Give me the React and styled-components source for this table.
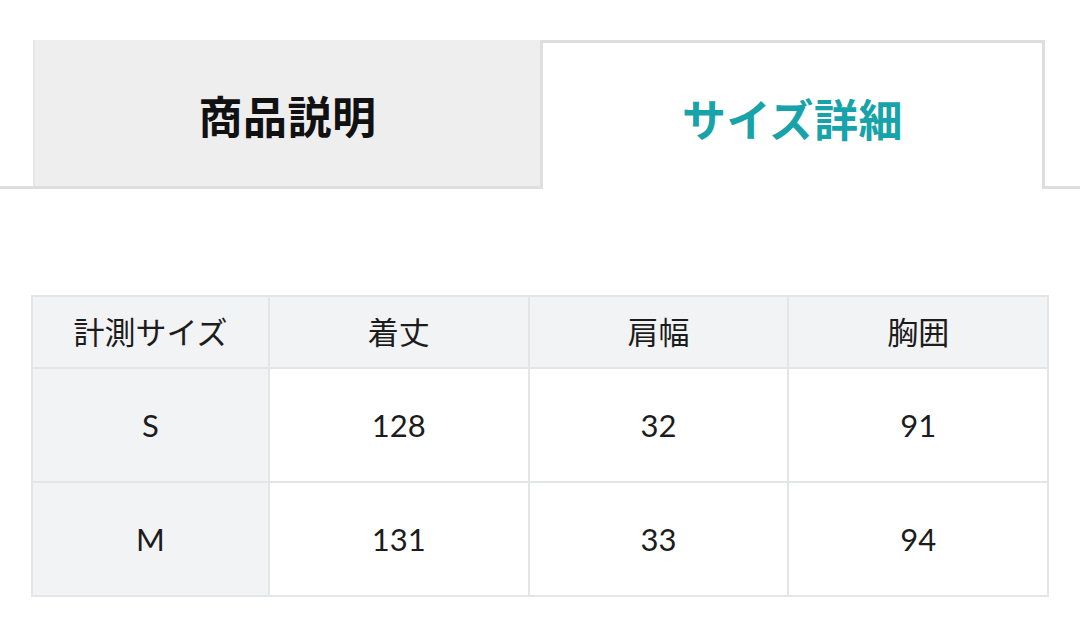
import React from 'react';
import styled, { createGlobalStyle } from 'styled-components';

const FONT = `Lato, "Noto Sans CJK JP", sans-serif`;

const GlobalStyle = createGlobalStyle`
  body {
    margin: 0;
    background: #ffffff;
    font-family: ${FONT};
  }
`;

const Page = styled.div`
  width: 1080px;
  height: 625px;
  overflow: hidden;
  background: #ffffff;
`;

const TabBar = styled.div`
  display: flex;
  align-items: flex-end;
  padding: 40px 0 0 33px;
  border-bottom: 3px solid #dedede;
`;

const Tab = styled.div`
  box-sizing: border-box;
  display: flex;
  align-items: center;
  justify-content: center;
  padding-top: 3px;
  font-family: ${FONT};
  font-weight: 700;
  font-size: 44px;
  letter-spacing: 0.5px;
  ${({ $active }) =>
    $active
      ? `
    width: 505px;
    height: 149px;
    margin-bottom: -3px;
    background: #ffffff;
    border: 3px solid #dedede;
    border-bottom: none;
    color: #17a3a9;
  `
      : `
    width: 507px;
    height: 146px;
    background: #eeeeee;
    border-left: 2px solid #e6e6e6;
    color: #111111;
  `}
`;

const TableWrap = styled.div`
  padding: 106px 31px 0 31px;
`;

const SizeTable = styled.table`
  width: 1018px;
  border-collapse: collapse;
  table-layout: fixed;
  border: 2px solid #e3e5e8;
  font-family: ${FONT};
  font-size: 31px;
  color: #1c1c1c;
`;

const Cell = styled.td`
  border: 2px solid #e3e5e8;
  text-align: center;
  vertical-align: middle;
  padding: ${({ $head }) => ($head ? '0 0 4px' : '0')};
  height: ${({ $head }) => ($head ? '66px' : '112px')};
  background: ${({ $shade }) => ($shade ? '#f2f3f5' : '#ffffff')};
`;

const headers = ['計測サイズ', '着丈', '肩幅', '胸囲'];
const rows = [
  ['S', '128', '32', '91'],
  ['M', '131', '33', '94'],
];

export default function App() {
  return (
    <Page>
      <GlobalStyle />
      <TabBar>
        <Tab>商品説明</Tab>
        <Tab $active>サイズ詳細</Tab>
      </TabBar>
      <TableWrap>
        <SizeTable>
          <colgroup>
            <col style={{ width: '237px' }} />
            <col />
            <col />
            <col />
          </colgroup>
          <tbody>
            <tr>
              {headers.map((h) => (
                <Cell key={h} $head $shade>
                  {h}
                </Cell>
              ))}
            </tr>
            {rows.map((r) => (
              <tr key={r[0]}>
                {r.map((v, i) => (
                  <Cell key={i} $shade={i === 0}>
                    {v}
                  </Cell>
                ))}
              </tr>
            ))}
          </tbody>
        </SizeTable>
      </TableWrap>
    </Page>
  );
}
